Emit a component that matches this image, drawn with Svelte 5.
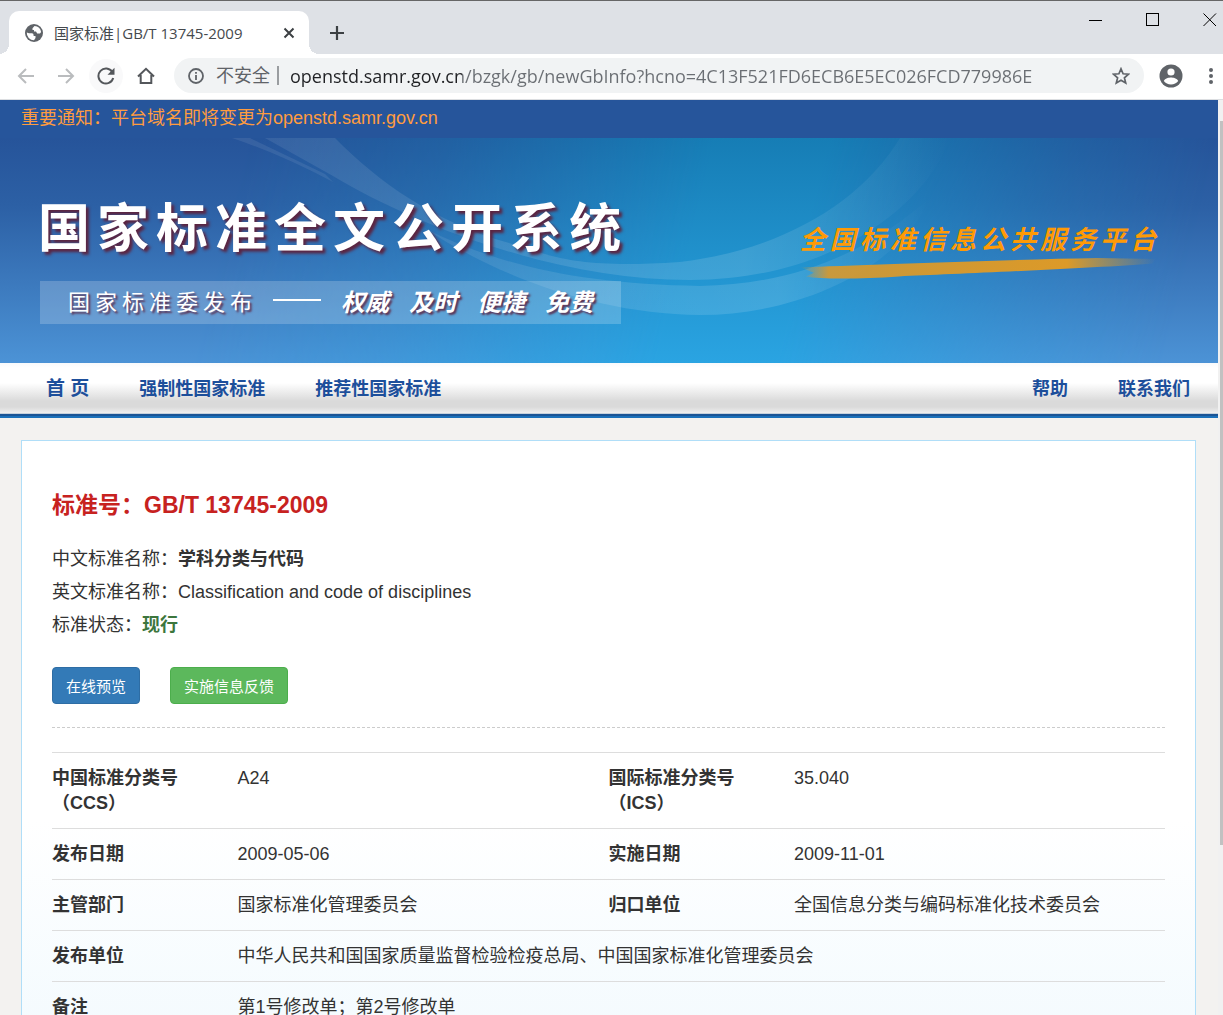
<script lang="ts">
	const tabTitle = '国家标准|GB/T 13745-2009';
	let address = $state('openstd.samr.gov.cn/bzgk/gb/newGbInfo?hcno=4C13F521FD6ECB6E5EC026FCD779986E');

	const siteName = '国家标准全文公开系统';
	const publisher = '国家标准委发布';
	const slogans = ['权威', '及时', '便捷', '免费'];
	const platform = '全国标准信息公共服务平台';

	const mainLinks = ['强制性国家标准', '推荐性国家标准'];
	const sideLinks = ['帮助', '联系我们'];

	const pairs = [
		['中国标准分类号（CCS）', 'A24', '国际标准分类号（ICS）', '35.040'],
		['发布日期', '2009-05-06', '实施日期', '2009-11-01'],
		['主管部门', '国家标准化管理委员会', '归口单位', '全国信息分类与编码标准化技术委员会']
	];

	const wideRows = [
		['发布单位', '中华人民共和国国家质量监督检验检疫总局、中国国家标准化管理委员会'],
		['备注', '第1号修改单；第2号修改单']
	];
</script>

<div class="window">
	<div class="tab-strip">
		<div class="tab">
			<svg class="globe" viewBox="0 0 18 18" width="18" height="18" aria-hidden="true">
				<circle cx="9" cy="9" r="9" fill="#5f6368" />
				<path d="M1.8 8.5 L4 9.2 H7 Q8.6 9.4 8.6 11 V12 H10.5 V14 L9 16.2 A7.2 7.2 0 0 1 1.8 8.5 Z" fill="#fff" />
				<path d="M9.5 1.9 L7.5 4.2 V6 H9 V7.5 H11 L12.2 9.5 H15 L16.1 8 A7.2 7.2 0 0 0 9.5 1.9 Z" fill="#fff" />
			</svg>
			<span class="tab-title">{tabTitle}</span>
			<button class="icon-btn" aria-label="关闭标签页">
				<svg viewBox="0 0 12 12" width="12" height="12"><path d="M1.5 1.5 L10.5 10.5 M10.5 1.5 L1.5 10.5" stroke="#3c4043" stroke-width="2" /></svg>
			</button>
		</div>
		<button class="icon-btn new-tab" aria-label="新标签页">
			<svg viewBox="0 0 16 16" width="16" height="16"><path d="M8 1 V15 M1 8 H15" stroke="#3c4043" stroke-width="2.2" /></svg>
		</button>
		<div class="window-controls">
			<button class="icon-btn" aria-label="最小化">
				<svg viewBox="0 0 14 14" width="14" height="14"><path d="M0 7.5 H13" stroke="#000" /></svg>
			</button>
			<button class="icon-btn" aria-label="最大化">
				<svg viewBox="0 0 14 14" width="14" height="14"><rect x="0.5" y="0.5" width="12" height="12" fill="none" stroke="#000" /></svg>
			</button>
			<button class="icon-btn" aria-label="关闭">
				<svg viewBox="0 0 14 14" width="14" height="14"><path d="M0.5 0.5 L13 13 M13 0.5 L0.5 13" stroke="#000" /></svg>
			</button>
		</div>
	</div>

	<div class="toolbar">
		<button class="icon-btn" aria-label="后退">
			<svg viewBox="0 0 18 16" width="18" height="16"><path d="M17 8 H2 M9 1 L2 8 L9 15" fill="none" stroke="#babcbe" stroke-width="2" /></svg>
		</button>
		<button class="icon-btn" aria-label="前进">
			<svg viewBox="0 0 18 16" width="18" height="16"><path d="M1 8 H16 M9 1 L16 8 L9 15" fill="none" stroke="#babcbe" stroke-width="2" /></svg>
		</button>
		<button class="icon-btn reload" aria-label="重新加载">
			<svg viewBox="0 0 18 18" width="18" height="18">
				<path d="M15.3 5 A7.5 7.5 0 1 0 16.2 11" fill="none" stroke="#54575b" stroke-width="2" />
				<path d="M17.5 0.8 V7.8 H10.5 Z" fill="#54575b" />
			</svg>
		</button>
		<button class="icon-btn" aria-label="主页">
			<svg viewBox="0 0 18 18" width="18" height="18"><path d="M1 9.5 L9 1.8 L17 9.5 M3.7 8 V16 H14.3 V8" fill="none" stroke="#54575b" stroke-width="2" /></svg>
		</button>
		<div class="omnibox">
			<svg viewBox="0 0 16 16" width="16" height="16" aria-hidden="true">
				<circle cx="8" cy="8" r="7" fill="none" stroke="#5f6368" stroke-width="1.8" />
				<path d="M8 7 V12 M8 4 V5.8" stroke="#5f6368" stroke-width="1.8" />
			</svg>
			<label class="insecure" for="address">不安全</label>
			<input id="address" class="address" type="text" bind:value={address} />
			<button class="icon-btn" aria-label="收藏">
				<svg viewBox="0 0 18 18" width="18" height="18"><path d="M9 1.8 L11.1 6.8 L16.5 7.2 L12.4 10.8 L13.7 16 L9 13.2 L4.3 16 L5.6 10.8 L1.5 7.2 L6.9 6.8 Z" fill="none" stroke="#5f6368" stroke-width="1.7" /></svg>
			</button>
		</div>
		<div class="profile">
			<button class="icon-btn" aria-label="用户">
				<svg viewBox="0 0 24 24" width="24" height="24">
					<circle cx="12" cy="12" r="11.5" fill="#5f6368" />
					<circle cx="12" cy="8" r="3.6" fill="#fff" />
					<path d="M4.8 17 C6 14.2 9.8 13.5 12 13.5 C14.2 13.5 18 14.2 19.2 17 C17.5 19.3 15 20.5 12 20.5 C9 20.5 6.5 19.3 4.8 17 Z" fill="#fff" />
				</svg>
			</button>
			<button class="icon-btn" aria-label="菜单">
				<svg viewBox="0 0 4 18" width="4" height="18" fill="#5f6368"><circle cx="2" cy="3" r="2" /><circle cx="2" cy="9" r="2" /><circle cx="2" cy="15" r="2" /></svg>
			</button>
		</div>
	</div>

	<div class="viewport">
		<div class="page">
			<div class="notice">重要通知：平台域名即将变更为openstd.samr.gov.cn</div>

			<header class="banner">
				<svg class="banner-bg" viewBox="0 0 1218 225" preserveAspectRatio="none" aria-hidden="true">
					<defs>
						<linearGradient id="edge" x1="0" y1="0" x2="0" y2="1">
							<stop offset="0" stop-color="#26549a" />
							<stop offset="0.3" stop-color="#2c60a5" />
							<stop offset="1" stop-color="#4c93d6" />
						</linearGradient>
						<linearGradient id="core" x1="0" y1="0" x2="0" y2="1">
							<stop offset="0" stop-color="#167db5" />
							<stop offset="1" stop-color="#2aa4e2" />
						</linearGradient>
						<linearGradient id="spread" gradientUnits="userSpaceOnUse" x1="250" y1="0" x2="1218" y2="0" gradientTransform="skewX(-14)">
							<stop offset="0" stop-color="#000" />
							<stop offset="0.2" stop-color="#4a4a4a" />
							<stop offset="0.35" stop-color="#aaa" />
							<stop offset="0.48" stop-color="#fff" />
							<stop offset="0.6" stop-color="#fff" />
							<stop offset="0.72" stop-color="#a0a0a0" />
							<stop offset="0.85" stop-color="#4a4a4a" />
							<stop offset="1" stop-color="#000" />
						</linearGradient>
						<linearGradient id="fade" x1="0" y1="0" x2="1" y2="0">
							<stop offset="0" stop-color="#fff" stop-opacity="0.08" />
							<stop offset="0.7" stop-color="#fff" stop-opacity="0.13" />
							<stop offset="1" stop-color="#fff" stop-opacity="0" />
						</linearGradient>
						<mask id="glow"><rect width="1218" height="225" fill="url(#spread)" /></mask>
					</defs>
					<rect width="1218" height="225" fill="url(#edge)" />
					<rect width="1218" height="225" fill="url(#core)" mask="url(#glow)" />
					<path d="M265 0 H335 C380 46 440 88 520 108 C560 122 590 130 680 124 C780 112 860 66 900 0 H950 C930 60 840 142 690 142 C560 142 420 90 333 38 Z" fill="url(#fade)" />
					<path d="M424 90 C500 128 580 146 700 148 C800 146 870 112 930 60 C900 130 800 177 700 177 C600 176 500 140 424 90 Z" fill="url(#fade)" />
					<path d="M232 0 H250 L325 36 L333 44 Q280 16 232 0 Z" fill="#fff" fill-opacity="0.08" />
				</svg>
				<div class="brand">
					<h1 class="site-name">{#each siteName as ch}<span>{ch}</span>{/each}</h1>
					<div class="tagline">
						<span class="publisher">{#each publisher as ch}<span>{ch}</span>{/each}</span>
						<span class="dash"></span>
						<span class="slogans">{#each slogans as slogan}<span>{slogan}</span>{/each}</span>
					</div>
				</div>
				<div class="platform">
					<div class="platform-name">{#each platform as ch}<span>{ch}</span>{/each}</div>
					<svg class="brush" viewBox="0 0 360 26" preserveAspectRatio="none" aria-hidden="true">
						<defs>
							<linearGradient id="ink" x1="0" y1="0" x2="1" y2="0">
								<stop offset="0" stop-color="#d9992c" stop-opacity="0" />
								<stop offset="0.08" stop-color="#d9992c" stop-opacity="0.9" />
								<stop offset="0.75" stop-color="#dc9a28" />
								<stop offset="1" stop-color="#dc9a28" stop-opacity="0" />
							</linearGradient>
						</defs>
						<path d="M0 10 C60 8 200 2 300 0 L360 1 L356 6 C300 11 160 17 100 20 C60 23 20 23 6 20 L14 16 Z" fill="url(#ink)" />
					</svg>
				</div>
			</header>

			<nav class="nav">
				<a class="home" href="#home">首 页</a>
				{#each mainLinks as link}
					<a href="#list">{link}</a>
				{/each}
				<span class="spacer"></span>
				{#each sideLinks as link}
					<a href="#info">{link}</a>
				{/each}
			</nav>

			<main class="card">
				<h2>标准号：GB/T 13745-2009</h2>
				<p>中文标准名称：<b>学科分类与代码</b></p>
				<p>英文标准名称：Classification and code of disciplines</p>
				<p>标准状态：<b class="active">现行</b></p>
				<div class="actions">
					<button class="btn primary">在线预览</button>
					<button class="btn success">实施信息反馈</button>
				</div>
				<table>
					<colgroup>
						<col class="key" /><col class="value" /><col class="key" /><col class="value" />
					</colgroup>
					<tbody>
						{#each pairs as [k1, v1, k2, v2]}
							<tr>
								<th scope="row">{k1}</th>
								<td>{v1}</td>
								<th scope="row">{k2}</th>
								<td>{v2}</td>
							</tr>
						{/each}
						{#each wideRows as [key, value]}
							<tr>
								<th scope="row">{key}</th>
								<td colspan="3">{value}</td>
							</tr>
						{/each}
					</tbody>
				</table>
			</main>
		</div>
		<div class="scrollbar"><div class="thumb"></div></div>
	</div>
</div>

<style>
	:global(body) {
		margin: 0;
		overflow: hidden;
	}

	.window {
		height: 100vh;
		display: flex;
		flex-direction: column;
		overflow: hidden;
		font-family: 'Liberation Sans', 'Noto Sans CJK SC', sans-serif;
		font-size: 18px;
		color: #333;
	}

	.icon-btn {
		display: flex;
		align-items: center;
		justify-content: center;
		flex: none;
		padding: 0;
		border: none;
		background: none;
	}

	/* browser frame */
	.tab-strip {
		flex: none;
		box-sizing: border-box;
		height: 54px;
		display: flex;
		align-items: flex-end;
		padding-left: 9px;
		background: #dee1e6;
		border-top: 1px solid #666;
	}

	.tab {
		position: relative;
		box-sizing: border-box;
		width: 300px;
		height: 43px;
		display: flex;
		align-items: center;
		gap: 11px;
		padding: 0 14px 0 16px;
		background: #fff;
		border-radius: 10px 10px 0 0;
	}

	.tab::before,
	.tab::after {
		content: '';
		position: absolute;
		bottom: 0;
		width: 10px;
		height: 10px;
	}

	.tab::before {
		left: -10px;
		background: radial-gradient(circle at 0 0, transparent 10px, #fff 10px);
	}

	.tab::after {
		right: -10px;
		background: radial-gradient(circle at 100% 0, transparent 10px, #fff 10px);
	}

	.tab-title {
		flex: 1;
		font-family: 'Open Sans', 'Noto Sans CJK SC', sans-serif;
		font-size: 15px;
		line-height: 20px;
		color: #45494d;
		white-space: nowrap;
	}

	.new-tab {
		height: 43px;
		margin-left: 20px;
	}

	.window-controls {
		align-self: flex-start;
		display: flex;
		gap: 43px;
		margin-left: auto;
		padding: 12px 6px 0 0;
	}

	.toolbar {
		flex: none;
		box-sizing: border-box;
		height: 46px;
		display: flex;
		align-items: center;
		gap: 22px;
		padding: 0 10px 2px 17px;
		background: #fff;
		border-bottom: 1px solid #dcdee1;
	}

	.reload {
		width: 34px;
		height: 34px;
		margin: 0 -8px;
		border-radius: 50%;
		background: #f9f9fa;
	}

	.profile {
		display: flex;
		align-items: center;
		gap: 26px;
	}

	.omnibox {
		flex: 1;
		box-sizing: border-box;
		height: 35px;
		display: flex;
		align-items: center;
		margin: 0 -7px 0 -3px;
		padding: 0 14px;
		border-radius: 18px;
		background: #f1f3f4;
		font-family: 'Open Sans', 'Noto Sans CJK SC', sans-serif;
		color: #5f6368;
	}

	.insecure {
		margin-left: 12px;
		padding-right: 7px;
		border-right: 2px solid #9a9da0;
		line-height: 19px;
		white-space: nowrap;
	}

	.address {
		flex: 1;
		min-width: 0;
		padding: 0 0 0 11px;
		border: none;
		outline: none;
		font-family: inherit;
		font-size: 18px;
		line-height: 26px;
		color: #202124;
		/* host dark, path grey */
		background: linear-gradient(to right, #202124 183px, #6a6e73 183px);
		-webkit-background-clip: text;
		background-clip: text;
		-webkit-text-fill-color: transparent;
	}

	/* web page */
	.viewport {
		flex: 1;
		min-height: 0;
		display: flex;
		background: #f3f2f0;
	}

	.page {
		flex: 1;
		min-width: 0;
		overflow: hidden;
	}

	.scrollbar {
		flex: none;
		box-sizing: border-box;
		width: 5px;
		padding: 21px 0 0 2px;
		background: #f1f1f1;
	}

	.thumb {
		height: 81%;
		background: #c1c1c1;
	}

	.notice {
		padding: 5px 21px 7px;
		background: #26559b;
		color: #ff9c3f;
		line-height: 26px;
	}

	.banner {
		position: relative;
		height: 225px;
		display: flex;
		justify-content: space-between;
	}

	.banner-bg {
		position: absolute;
		inset: 0;
		width: 100%;
		height: 100%;
	}

	.brand {
		position: relative;
		padding: 60px 0 0 40px;
	}

	.site-name {
		display: flex;
		gap: 7px;
		margin: 0 0 0 -2px;
		font-size: 52px;
		line-height: 62px;
		font-weight: 700;
		color: #fff;
		text-shadow: 3px 3px 3px #5c2440;
	}

	.tagline {
		box-sizing: border-box;
		display: flex;
		align-items: center;
		margin-top: 21px;
		padding: 0 24px 5px 28px;
		height: 43px;
		background: rgba(255, 255, 255, 0.2);
		color: #fff;
		text-shadow: 2px 2px 2px #5c3050;
	}

	.publisher {
		display: flex;
		gap: 5px;
		font-size: 22px;
	}

	.dash {
		width: 48px;
		height: 2px;
		margin: 0 20px 0 21px;
		background: #fff;
	}

	.slogans {
		display: flex;
		gap: 20px;
		font-size: 24px;
		font-weight: 700;
		font-style: italic;
	}

	.platform {
		position: relative;
		padding: 84px 62px 0 0;
	}

	.platform-name {
		display: flex;
		gap: 4px;
		font-size: 26px;
		line-height: 36px;
		font-weight: 700;
		font-style: italic;
		color: #ff9a05;
	}

	.brush {
		display: block;
		width: 100%;
		height: 24px;
	}

	.nav {
		box-sizing: border-box;
		display: flex;
		align-items: center;
		gap: 50px;
		height: 55px;
		padding: 0 28px 8px 46px;
		background: linear-gradient(
			#f8fafc,
			#fff 5px,
			#fff 20px,
			#dadada 38px,
			#dadada 44px,
			#f0f0f0 50px,
			#9fb3c8 51px,
			#1b5596 51px,
			#1b5596 53px,
			#1c71ba 53px
		);
	}

	.nav a {
		font-weight: 700;
		color: #1d4f9b;
		text-decoration: none;
		white-space: nowrap;
	}

	.nav .home {
		font-size: 19px;
	}

	.spacer {
		flex: 1;
	}

	.card {
		margin: 22px 22px 30px 21px;
		padding: 47px 30px 30px;
		border: 1px solid #b0def8;
		background: linear-gradient(#fff 380px, #f2fafe 620px);
	}

	.card h2 {
		margin: 0 0 21px;
		font-size: 23px;
		line-height: 34px;
		font-weight: 700;
		color: #c7221f;
	}

	.card p {
		margin: 0;
		line-height: 33px;
	}

	.card .active {
		color: #3c763d;
	}

	.actions {
		display: flex;
		gap: 30px;
		padding: 25px 0 23px;
		border-bottom: 1px dashed #ccc;
	}

	.btn {
		height: 37px;
		padding: 0 13px;
		border: 1px solid;
		border-radius: 4px;
		font-family: inherit;
		font-size: 15px;
		color: #fff;
	}

	.primary {
		background: #337ab7;
		border-color: #2e6da4;
	}

	.success {
		background: #5cb85c;
		border-color: #4cae4c;
	}

	table {
		width: 100%;
		margin-top: 24px;
		table-layout: fixed;
		border-collapse: collapse;
	}

	.key {
		width: 16.66%;
	}

	.value {
		width: 33.33%;
	}

	th,
	td {
		padding: 13px 30px 12px 0;
		border-top: 1px solid #ddd;
		line-height: 25px;
		text-align: left;
		vertical-align: top;
	}

	td {
		padding-right: 0;
	}
</style>
